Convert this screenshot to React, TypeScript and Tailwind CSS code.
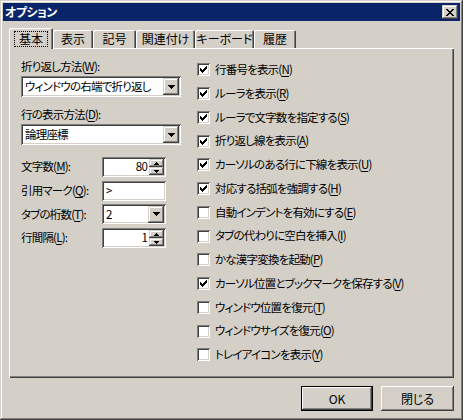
import React from 'react';

const FONT = "font-['Noto_Sans_CJK_JP','Noto_Sans',sans-serif] [font-feature-settings:'palt']";
const SUNKEN = 'shadow-[inset_1px_1px_#808080,inset_-1px_-1px_#ffffff,inset_2px_2px_#404040,inset_-2px_-2px_#d4d0c8]';
const RAISED = 'shadow-[inset_-1px_-1px_#404040,inset_1px_1px_#d4d0c8,inset_-2px_-2px_#808080,inset_2px_2px_#ffffff]';
const BUTTON = 'shadow-[inset_-1px_-1px_#404040,inset_1px_1px_#ffffff,inset_-2px_-2px_#808080]';
const TEXT = 'text-[11.5px] tracking-[-0.8px]';

const Key = ({ text, k, colon }: { text: string; k: string; colon?: boolean }) => (
  <span className="whitespace-nowrap">
    {text}(<span className="underline underline-offset-2">{k}</span>){colon ? ':' : ''}
  </span>
);

const DownArrow = () => (
  <svg width="7" height="4" viewBox="0 0 7 4" shapeRendering="crispEdges">
    <path d="M0 0h7v1h-1v1h-1v1h-1v1h-1v-1h-1v-1h-1v-1h-1z" fill="#000" />
  </svg>
);

const Combo = ({ value, w }: { value: string; w: string }) => (
  <div className={`${w} h-[21px] bg-white ${SUNKEN} flex items-center p-[2px]`}>
    <span className={`flex-1 pl-[2px] ${TEXT} leading-[15px] whitespace-nowrap`}>{value}</span>
    <div className={`w-[16px] h-[17px] shrink-0 bg-[#d4d0c8] ${RAISED} flex items-center justify-center`}>
      <DownArrow />
    </div>
  </div>
);

const SpinBox = ({ value }: { value: string }) => (
  <div className={`w-[64px] h-full bg-white ${SUNKEN} flex items-stretch p-[2px]`}>
    <span className={`flex-1 pr-[2px] ${TEXT} leading-none flex items-center justify-end`}>{value}</span>
    <div className="w-[15px] flex flex-col">
      <div className={`flex-1 bg-[#d4d0c8] ${RAISED} flex items-center justify-center`}>
        <svg width="5" height="3" viewBox="0 0 5 3" shapeRendering="crispEdges">
          <path d="M2 0h1v1h1v1h1v1h-5v-1h1v-1h1z" fill="#000" />
        </svg>
      </div>
      <div className={`flex-1 bg-[#d4d0c8] ${RAISED} flex items-center justify-center`}>
        <svg width="5" height="3" viewBox="0 0 5 3" shapeRendering="crispEdges">
          <path d="M0 0h5v1h-1v1h-1v1h-1v-1h-1v-1h-1z" fill="#000" />
        </svg>
      </div>
    </div>
  </div>
);

const Check = ({ on }: { on: boolean }) => (
  <div className={`w-[13px] h-[13px] shrink-0 bg-white ${SUNKEN} flex items-center justify-center`}>
    {on && (
      <svg width="7" height="7" viewBox="0 0 7 7" shapeRendering="crispEdges">
        <rect x="0" y="2" width="1" height="3" fill="#000" />
        <rect x="1" y="3" width="1" height="3" fill="#000" />
        <rect x="2" y="4" width="1" height="3" fill="#000" />
        <rect x="3" y="3" width="1" height="3" fill="#000" />
        <rect x="4" y="2" width="1" height="3" fill="#000" />
        <rect x="5" y="1" width="1" height="3" fill="#000" />
        <rect x="6" y="0" width="1" height="3" fill="#000" />
      </svg>
    )}
  </div>
);

const options: [string, string, boolean][] = [
  ['行番号を表示', 'N', true],
  ['ルーラを表示', 'R', true],
  ['ルーラで文字数を指定する', 'S', true],
  ['折り返し線を表示', 'A', true],
  ['カーソルのある行に下線を表示', 'U', true],
  ['対応する括弧を強調する', 'H', true],
  ['自動インデントを有効にする', 'E', false],
  ['タブの代わりに空白を挿入', 'I', false],
  ['かな漢字変換を起動', 'P', false],
  ['カーソル位置とブックマークを保存する', 'V', true],
  ['ウィンドウ位置を復元', 'T', false],
  ['ウィンドウサイズを復元', 'O', false],
  ['トレイアイコンを表示', 'Y', false],
];

const tabs = [
  { label: '表示', w: 'w-[40px]' },
  { label: '記号', w: 'w-[43px]' },
  { label: '関連付け', w: 'w-[59px]' },
  { label: 'キーボード', w: 'w-[59px]' },
  { label: '履歴', w: 'w-[42px]' },
];

export default function App() {
  return (
    <div
      className={`w-[463px] h-[420px] bg-[#d4d0c8] p-[3px] flex flex-col text-black ${FONT} shadow-[inset_-1px_-1px_#404040,inset_1px_1px_#d4d0c8,inset_-2px_-2px_#808080,inset_2px_2px_#ffffff]`}
    >
      {/* Title bar */}
      <div className="h-[18px] bg-[#0a246a] flex items-center justify-between pl-[2px] pr-[2px]">
        <span className="text-white font-bold text-[12px] tracking-[-0.5px] leading-none">オプション</span>
        <div className={`w-[16px] h-[14px] bg-[#d4d0c8] ${RAISED} flex items-center justify-center`}>
          <svg width="8" height="7" viewBox="0 0 8 7" shapeRendering="crispEdges">
            <path d="M0 0h2v1h1v1h2v-1h1v-1h2v1h-1v1h-1v1h-1v1h1v1h1v1h1v1h-2v-1h-1v-1h-2v1h-1v1h-2v-1h1v-1h1v-1h1v-1h-1v-1h-1v-1h-1z" fill="#000" />
          </svg>
        </div>
      </div>

      <div className="flex-1 flex flex-col px-[6px]">
        {/* Tabs */}
        <div className="h-[20px] mt-[7px] flex items-end">
          <div className="relative z-10 w-[44px] h-[21px] -mb-px bg-[#d4d0c8] rounded-t-[2px] shadow-[inset_1px_1px_#ffffff,inset_-1px_0_#404040,inset_-2px_0_#808080] flex items-start justify-center pt-[3px]">
            <span className="border border-dotted border-black px-[4px] text-[12px] leading-[14px]">基本</span>
          </div>
          {tabs.map((t) => (
            <div
              key={t.label}
              className={`${t.w} h-[18px] shrink-0 bg-[#d4d0c8] rounded-t-[2px] shadow-[inset_1px_1px_#ffffff,inset_-1px_0_#404040,inset_-2px_0_#808080] flex items-center justify-center text-[12px] leading-none whitespace-nowrap`}
            >
              {t.label}
            </div>
          ))}
        </div>

        {/* Panel */}
        <div className="h-[330px] shadow-[inset_1px_1px_#ffffff,inset_-1px_-1px_#404040,inset_-2px_-2px_#808080] pl-[12px] pt-[9px] flex gap-[16px]">
          <div className={`w-[160px] flex flex-col ${TEXT} leading-none`}>
            <div className="h-[19px] flex items-center">
              <Key text="折り返し方法" k="W" colon />
            </div>
            <Combo value="ウィンドウの右端で折り返し" w="w-[160px]" />
            <div className="h-[19px] mt-[8px] flex items-center">
              <Key text="行の表示方法" k="D" colon />
            </div>
            <Combo value="論理座標" w="w-[160px]" />

            <div className="mt-[12px] flex flex-col gap-[3.7px]">
              <div className="h-[20px] flex items-center">
                <div className="w-[81px]"><Key text="文字数" k="M" colon /></div>
                <SpinBox value="80" />
              </div>
              <div className="h-[20px] flex items-center">
                <div className="w-[81px]"><Key text="引用マーク" k="Q" colon /></div>
                <div className={`w-[64px] h-full bg-white ${SUNKEN} flex items-center pl-[4px]`}>&gt;</div>
              </div>
              <div className="h-[20px] flex items-center">
                <div className="w-[81px]"><Key text="タブの桁数" k="T" colon /></div>
                <Combo value="2" w="w-[64px] !h-[20px]" />
              </div>
              <div className="h-[20px] flex items-center">
                <div className="w-[81px]"><Key text="行間隔" k="L" colon /></div>
                <SpinBox value="1" />
              </div>
            </div>
          </div>

          <div className="flex flex-col pt-px">
            {options.map(([text, k, on]) => (
              <div key={text} className={`h-[23.75px] flex items-center gap-[5px] ${TEXT} leading-none`}>
                <Check on={on} />
                <Key text={text} k={k} />
              </div>
            ))}
          </div>
        </div>

        {/* Buttons */}
        <div className="mt-[8px] flex justify-end gap-[8px] text-[12px]">
          <div className={`w-[72px] h-[25px] border border-black bg-[#d4d0c8] ${BUTTON} flex items-center justify-center`}>
            OK
          </div>
          <div className={`w-[73px] h-[25px] bg-[#d4d0c8] shadow-[inset_-1px_-1px_#404040,inset_1px_1px_#ffffff,inset_-2px_-2px_#808080] flex items-center justify-center`}>
            閉じる
          </div>
        </div>
      </div>
    </div>
  );
}
